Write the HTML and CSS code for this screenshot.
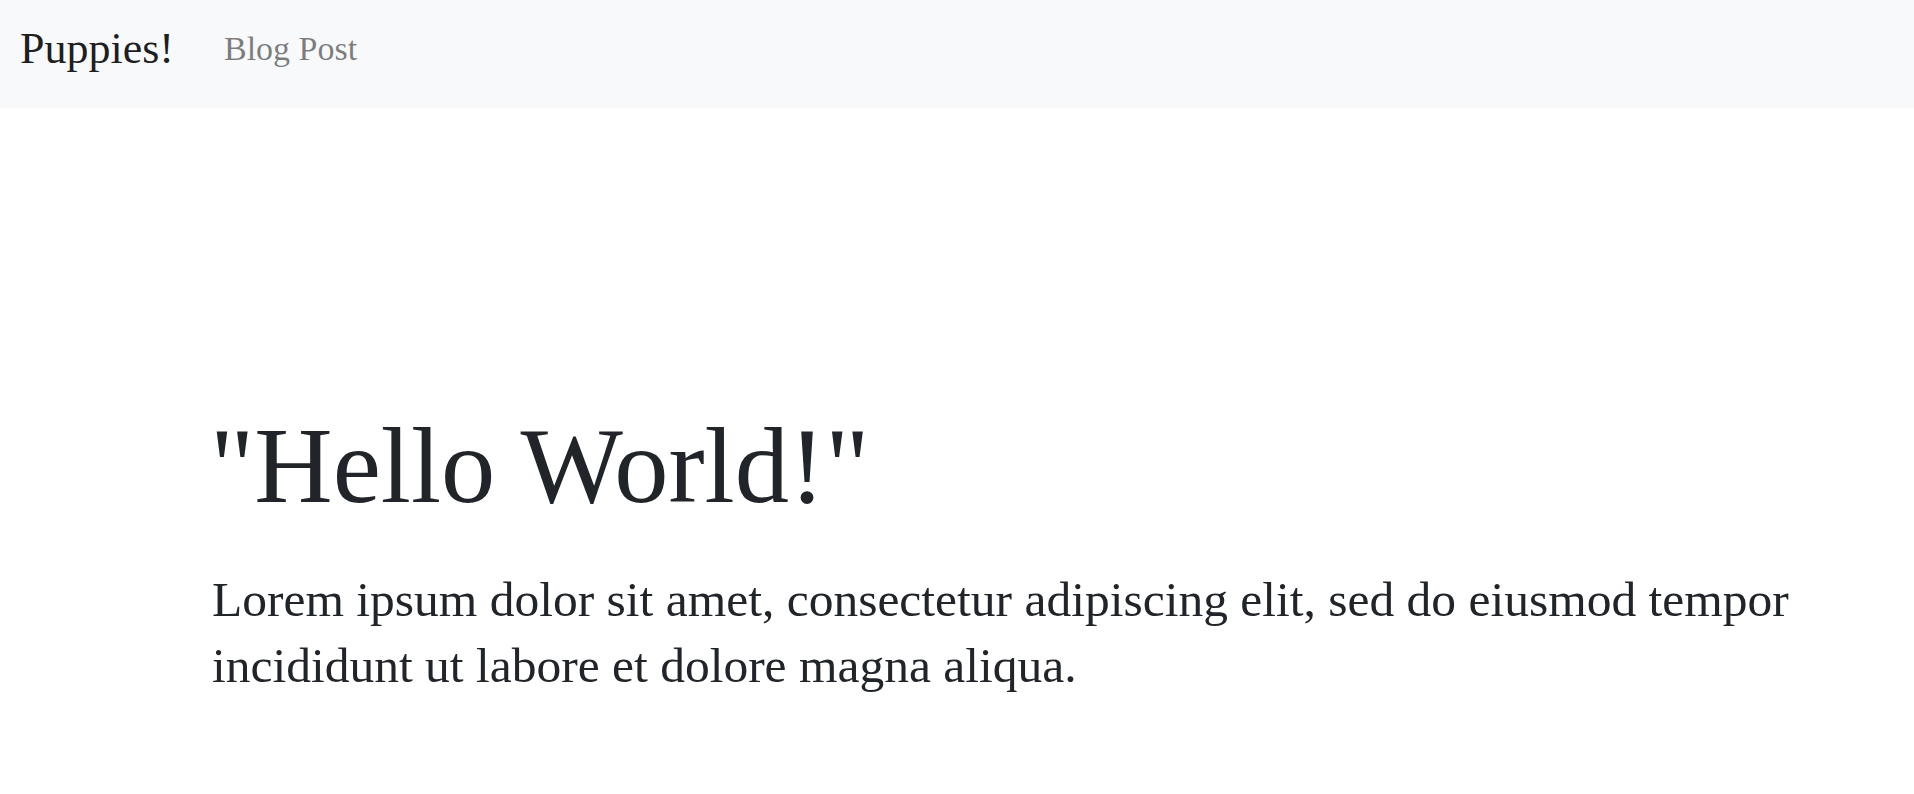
FILE: index.html
```html
<!DOCTYPE html>
<html lang="en">
<head>
<meta charset="utf-8">
<title>Puppies!</title>
<link rel="stylesheet" href="styles.css">
</head>
<body>
<nav class="navbar">
  <a class="brand" href="#">Puppies!</a>
  <a class="nav-link" href="#">Blog Post</a>
</nav>
<main class="hero">
  <h1 class="title">"Hello World!"</h1>
  <p class="lead">Lorem ipsum dolor sit amet, consectetur adipiscing elit, sed do eiusmod tempor incididunt ut labore et dolore magna aliqua.</p>
</main>
</body>
</html>
```
FILE: styles.css
```css
html, body {
  margin: 0;
  padding: 0;
  background: #ffffff;
}
body {
  font-family: "Liberation Serif", "Times New Roman", serif;
  color: #212529;
}
.navbar {
  box-sizing: border-box;
  height: 108px;
  background: #f8f9fa;
  display: flex;
  align-items: center;
  gap: 50px;
  padding: 0 20px 11px 20px;
}
.brand {
  font-size: 44px;
  line-height: 50px;
  color: rgba(0, 0, 0, 0.9);
  text-decoration: none;
}
.nav-link {
  font-size: 34px;
  line-height: 40px;
  color: rgba(0, 0, 0, 0.5);
  text-decoration: none;
}
.hero {
  padding: 292px 62px 0 212px;
}
.title {
  margin: 0 0 37px -2px;
  font-size: 108.5px;
  font-weight: 400;
  line-height: 1.2;
}
.lead {
  margin: 0;
  font-size: 49.5px;
  line-height: 66px;
}
```
